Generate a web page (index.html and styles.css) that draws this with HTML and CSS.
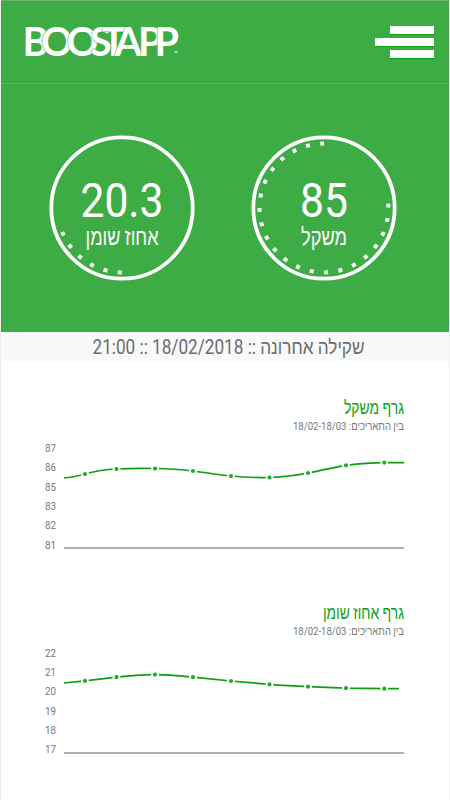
FILE: index.html
```html
<!DOCTYPE html>
<html lang="he" dir="rtl">
<head>
    <meta charset="UTF-8">
    <meta name="viewport" content="width=device-width, initial-scale=1.0">
    <title>Boostapp</title>
    <link rel="stylesheet" href="styles.css">
</head>
<body>
    <header class="header">
        <button class="menu" type="button">
            <span class="menu-bar short"></span>
            <span class="menu-bar"></span>
            <span class="menu-bar short"></span>
        </button>
        <svg class="logo" width="160" height="40" viewBox="0 0 160 40">
            <text y="34.5" x="-2.5 16 41.5 65 77 89.5 113 129.5">BOOSTAPP</text>
            <text class="tm" x="149" y="34">™</text>
        </svg>
    </header>

    <section class="gauges">
        <svg class="gauge" width="146" height="146" viewBox="0 0 146 146">
            <circle class="ring" cx="73" cy="73" r="70.7"/>
            <path class="dots" d="M137.2 68.6A64.4 64.4 0 1 1 73 8.6"/>
            <text class="value" x="73" y="82" textLength="48">85</text>
            <text class="label" x="73" y="110" textLength="46">משקל</text>
        </svg>
        <svg class="gauge" width="146" height="146" viewBox="0 0 146 146">
            <circle class="ring" cx="73" cy="73" r="70.7"/>
            <path class="dots" d="M72.7 137.4A64.4 64.4 0 0 1 13.3 97.1"/>
            <text class="value" x="73" y="82" textLength="83">20.3</text>
            <text class="label" x="73" y="110" textLength="73">אחוז שומן</text>
        </svg>
    </section>

    <div class="last">
        <svg width="280" height="30">
            <text x="143.5" y="22" textLength="272">שקילה אחרונה :: 18/02/2018 :: 21:00</text>
        </svg>
    </div>

    <section class="chart">
        <svg class="chart-head" width="120" height="45">
            <text class="title" x="120" y="24" textLength="60">גרף משקל</text>
            <text class="dates" x="120" y="40" textLength="111">בין התאריכים: 18/02-18/03</text>
        </svg>
        <svg class="plot" width="361" height="115">
            <g class="axis">
                <text x="1" y="12" textLength="11">87</text>
                <text x="1" y="31.3" textLength="11">86</text>
                <text x="1" y="50.6" textLength="11">85</text>
                <text x="1" y="70" textLength="11">83</text>
                <text x="1" y="89.3" textLength="11">82</text>
                <text x="1" y="108.6" textLength="11">81</text>
            </g>
            <path class="base" d="M20 108H360"/>
            <path class="line" d="M20 38C27 37.6 34 36 41 34C51 31.2 61 29.4 72.5 29C85 28.3 98 28.3 111 28.5C124 28.6 137 29.4 149 31C162 32.5 174 34.8 187 36C200 37.2 213 37.8 225.5 37.5C239 36.9 252 35.4 264 33C277 30.4 289 27.5 302 25.3C315 23.6 327 22.6 340.5 22.6H360"/>
            <g class="points">
                <circle cx="41" cy="34" r="3"/>
                <circle cx="72.5" cy="29" r="3"/>
                <circle cx="111" cy="28.5" r="3"/>
                <circle cx="149" cy="31" r="3"/>
                <circle cx="187" cy="36" r="3"/>
                <circle cx="225.5" cy="37.5" r="3"/>
                <circle cx="264" cy="33" r="3"/>
                <circle cx="302" cy="25.3" r="3"/>
                <circle cx="340.3" cy="22.6" r="3"/>
            </g>
        </svg>
    </section>

    <section class="chart">
        <svg class="chart-head" width="120" height="45">
            <text class="title" x="120" y="24" textLength="81">גרף אחוז שומן</text>
            <text class="dates" x="120" y="40" textLength="111">בין התאריכים: 18/02-18/03</text>
        </svg>
        <svg class="plot" width="361" height="115">
            <g class="axis">
                <text x="1" y="11.6" textLength="11">22</text>
                <text x="1" y="31" textLength="11">21</text>
                <text x="1" y="50.2" textLength="11">20</text>
                <text x="1" y="69.6" textLength="11">19</text>
                <text x="1" y="89" textLength="11">18</text>
                <text x="1" y="108.2" textLength="11">17</text>
            </g>
            <path class="base" d="M20 108H360"/>
            <path class="line" d="M20 38L41 35.8L72.5 32.2C85 30.7 98 29.4 111 29.6C124 29.6 137 31 149 32.2L187 36L225.5 39.4C239 40.5 252 41.2 264 41.7L302 43.2L340.3 43.7H355"/>
            <g class="points">
                <circle cx="41" cy="35.8" r="3"/>
                <circle cx="72.5" cy="32.2" r="3"/>
                <circle cx="111" cy="29.6" r="3"/>
                <circle cx="149" cy="32.2" r="3"/>
                <circle cx="187" cy="36" r="3"/>
                <circle cx="225.5" cy="39.4" r="3"/>
                <circle cx="264" cy="41.7" r="3"/>
                <circle cx="302" cy="43.2" r="3"/>
                <circle cx="340.3" cy="43.7" r="3"/>
            </g>
        </svg>
    </section>

    <script>
        // condense the glyphs too, not only the gaps between them
        document.querySelectorAll('text[textLength]').forEach(function (t) {
            t.setAttribute('lengthAdjust', 'spacingAndGlyphs');
        });
    </script>
</body>
</html>
```
FILE: styles.css
```css
* {
    box-sizing: border-box;
}
body {
    margin: 0;
    width: 450px;
    height: 800px;
    overflow: hidden;
    background-color: #fff;
    border-left: 1px solid #eee;
    border-right: 1px solid #f0f0f0;
    font-family: Roboto, "Liberation Sans", sans-serif;
}
svg {
    display: block;
    overflow: visible;
}
.header {
    display: flex;
    justify-content: space-between;
    align-items: flex-start;
    height: 84px;
    margin: 0 -1px;
    padding: 20px 16px 0 25px;
    background-color: #3dac45;
    border-top: 1px solid #6bb872;
    border-bottom: 1px solid #56b75d;
}
.logo {
    direction: ltr;
}
.logo text {
    font-family: Lato, sans-serif;
    font-size: 39.5px;
    font-weight: 700;
    fill: #fff;
    stroke: #3dac45;
    stroke-width: 1px;
    paint-order: stroke;
}
.logo .tm {
    font-size: 5px;
    stroke: none;
}
.menu {
    display: flex;
    flex-direction: column;
    align-items: flex-start;
    gap: 4px;
    width: 59px;
    margin-top: 5px;
    padding: 0;
    border: none;
    background: none;
}
.menu-bar {
    width: 59px;
    height: 8px;
    background-color: #fff;
    box-shadow: 0 1px 0 #0ba010;
}
.menu-bar.short {
    width: 44px;
}
.gauges {
    display: flex;
    justify-content: space-between;
    height: 248px;
    margin: 0 -1px;
    padding: 51px 53.5px 0 49px;
    background-color: #3dac45;
}
.gauge text {
    direction: ltr;
    text-anchor: middle;
    fill: #fff;
}
.ring {
    fill: none;
    stroke: #fff;
    stroke-width: 3.8;
}
.dots {
    fill: none;
    stroke: #fff;
    stroke-width: 4;
    stroke-dasharray: 4 10.46;
}
.value {
    font-size: 49px;
}
.gauge .label {
    font-size: 24px;
}
.last {
    display: flex;
    justify-content: center;
    height: 29px;
    background-color: #f8f9f9;
}
.last text {
    font-size: 20px;
    text-anchor: middle;
    fill: #6c6c6c;
}
.chart {
    height: 204.6px;
    padding: 29px 45px 0 42px;
}
.chart-head {
    height: 50px;
}
.chart-head text {
    text-anchor: start;
}
.title {
    font-size: 18px;
    fill: #0ba010;
}
.dates {
    font-size: 11.5px;
    fill: #777;
}
.plot {
    direction: ltr;
    margin-right: -1px;
}
.axis text {
    font-size: 11.5px;
    fill: #777;
}
.base {
    stroke: #949494;
    stroke-width: 1.6;
}
.line {
    fill: none;
    stroke: #0ba010;
    stroke-width: 1.7;
}
.points circle {
    fill: #22a82b;
    stroke: #fff;
    stroke-width: 1.8;
}
```
